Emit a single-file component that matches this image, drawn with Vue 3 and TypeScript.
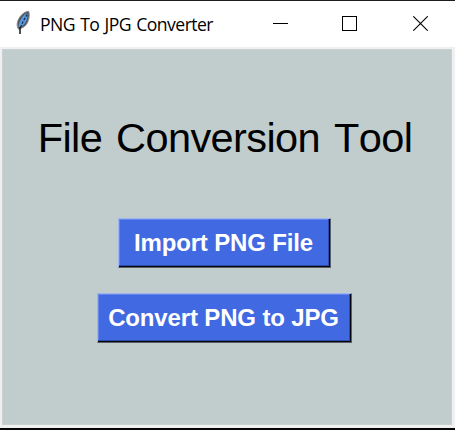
<script setup lang="ts">
interface Action {
  id: string
  label: string
}

const windowTitle: string = 'PNG To JPG Converter'
const heading: string = 'File Conversion Tool'
const actions: Action[] = [
  { id: 'import', label: 'Import PNG File' },
  { id: 'convert', label: 'Convert PNG to JPG' },
]
</script>

<template>
  <div class="window">
    <header class="titlebar">
      <svg class="feather" width="16" height="26" viewBox="0 0 16 26">
        <path d="M13.7 1.3C9.6 1.3 5 5.6 3 10.3C1.6 13.7 1.9 17.2 3.5 19.2C7.6 18.6 11.6 15.5 13 11.6C14.3 8 14.8 4 13.7 1.3Z" fill="#55585c" stroke="#8c8c8c" stroke-width="0.9" />
        <path d="M11.6 3.2C7.4 5.8 3.9 11.4 3.4 17.2L6.6 16.2C10.2 13.8 12.6 9.8 12.4 4.4Z" fill="#559be8" />
        <path d="M12 4.6C10 8.2 7 12.8 5.2 18.6" fill="none" stroke="#172b40" stroke-width="1.2" stroke-dasharray="2.5 1.5" />
        <path d="M5 17V24" stroke="#171717" stroke-width="1.5" />
      </svg>
      <span class="caption">{{ windowTitle }}</span>
      <div class="controls">
        <svg width="15" height="15" viewBox="0 0 15 15" shape-rendering="crispEdges">
          <path d="M0 7.5H15" stroke="#000" />
        </svg>
        <svg width="15" height="15" viewBox="0 0 15 15" shape-rendering="crispEdges">
          <rect x="0.5" y="0.5" width="14" height="14" fill="none" stroke="#000" />
        </svg>
        <svg class="close" width="15" height="15" viewBox="0 0 15 15">
          <path d="M0.3 0.3L14.7 14.7M14.7 0.3L0.3 14.7" stroke="#000" stroke-width="1.1" />
        </svg>
      </div>
    </header>
    <main class="client">
      <h1 class="heading">{{ heading }}</h1>
      <div class="actions">
        <button v-for="action in actions" :key="action.id" type="button" :class="['action', action.id]">
          {{ action.label }}
        </button>
      </div>
    </main>
  </div>
</template>

<style>
body {
  margin: 0;
  overflow: hidden;
}
</style>

<style scoped>
.window {
  box-sizing: border-box;
  width: 455px;
  height: 430px;
  display: flex;
  flex-direction: column;
  border-top: 1px solid #1d1b1e;
  border-bottom: 2px solid #050505;
  background: #f0f0f0;
}
.titlebar {
  box-sizing: border-box;
  height: 46px;
  flex: none;
  display: flex;
  align-items: center;
  padding: 0 27px 1px 15px;
  background: #fff;
}
.feather {
  flex: none;
  margin-top: -2px;
}
.caption {
  margin-left: 9px;
  padding-top: 1px;
  font: 17.6px/24px "Open Sans", "Noto Sans", sans-serif;
  font-kerning: none;
  letter-spacing: -0.55px;
  word-spacing: 1.2px;
  color: #000;
  white-space: nowrap;
}
.controls {
  display: flex;
  gap: 54px;
  margin-left: auto;
}
.close {
  margin-left: 2px;
}
.client {
  box-sizing: border-box;
  height: 376px;
  margin: 2px 3px 0 2px;
  padding-top: 64px;
  display: flex;
  flex-direction: column;
  align-items: center;
  border: 1px solid #c9d2d1;
  background: #c1cdcd;
}
.heading {
  margin: 0 4px 0 0;
  font: 400 41.5px/48px "Liberation Sans", Arial, sans-serif;
  font-kerning: none;
  letter-spacing: -0.6px;
  word-spacing: 3px;
  color: #000;
  white-space: nowrap;
}
.actions {
  display: flex;
  flex-direction: column;
  align-items: center;
  gap: 25px;
  margin-top: 56px;
  margin-right: 6px;
}
.action {
  box-sizing: border-box;
  height: 50px;
  padding: 0 1px 1px 0;
  border: 1px solid;
  border-color: #a0b4ed #5a6065 #5a6065 #a0b4ed;
  border-radius: 0;
  background: #4169e1;
  box-shadow: inset -1px -1px #05060c, inset -2px -2px #2d4ba8, inset 1px 1px #6485eb;
  color: #fff;
  font: 700 24px/45px "Liberation Sans", Arial, sans-serif;
  letter-spacing: -0.15px;
  white-space: nowrap;
}
.import {
  width: 213px;
}
.convert {
  width: 255px;
}
</style>
